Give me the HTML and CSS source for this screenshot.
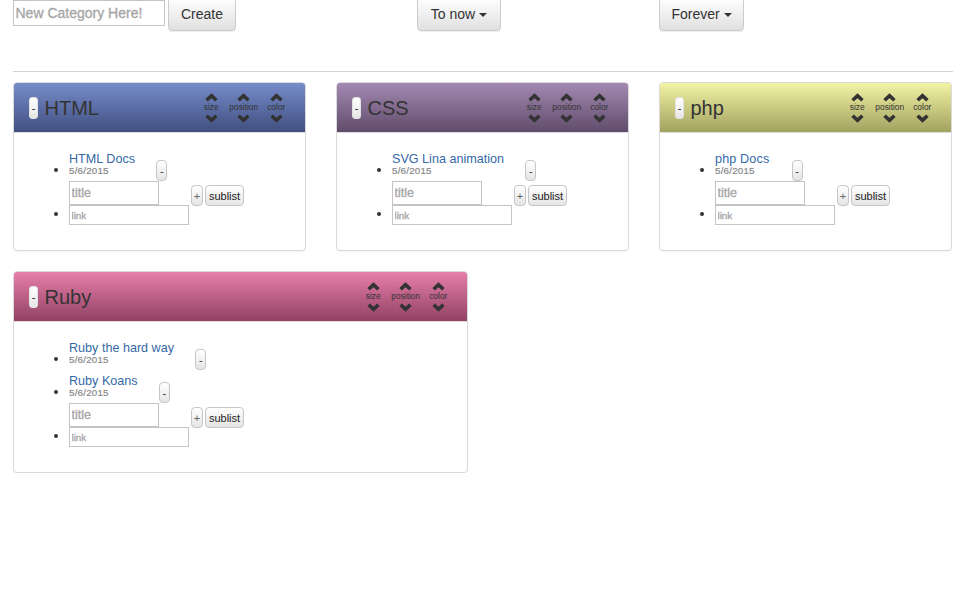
FILE: index.html
```html
<!DOCTYPE html>
<html lang="en">
<head>
<meta charset="utf-8">
<title>Categories</title>
<link rel="stylesheet" href="styles.css">
</head>
<body>
<svg class="defs" width="0" height="0">
  <symbol id="up" viewBox="0 0 14 9"><path d="M7 0 13.6 6 11 8.9 7 5.2 3 8.9.4 6Z"/></symbol>
  <symbol id="down" viewBox="0 0 14 9"><path d="M7 9 .4 3 3 .1 7 3.8 11 .1 13.6 3Z"/></symbol>
</svg>
<header class="toolbar">
  <form class="create">
    <input class="new-category" type="text" placeholder="New Category Here!">
    <button class="btn" type="button">Create</button>
  </form>
  <div><button class="btn btn-now" type="button">To now <span class="caret"></span></button></div>
  <div><button class="btn btn-forever" type="button">Forever <span class="caret"></span></button></div>
</header>
<main class="board">
  <section class="panel">
    <div class="head blue">
      <button class="mini remove">-</button><h2>HTML</h2>
      <div class="controls">
        <div><svg><use href="#up"/></svg><span>size</span><svg><use href="#down"/></svg></div>
        <div><svg><use href="#up"/></svg><span>position</span><svg><use href="#down"/></svg></div>
        <div><svg><use href="#up"/></svg><span>color</span><svg><use href="#down"/></svg></div>
      </div>
    </div>
    <ul>
      <li class="item"><div class="entry"><a>HTML Docs</a><small>5/6/2015</small></div><button class="mini">-</button></li>
      <li class="add"><div class="fields"><input class="title" placeholder="title"><input class="link" placeholder="link"></div><button class="mini plus">+</button><button class="mini sub">sublist</button></li>
    </ul>
  </section>
  <section class="panel">
    <div class="head purple">
      <button class="mini remove">-</button><h2>CSS</h2>
      <div class="controls">
        <div><svg><use href="#up"/></svg><span>size</span><svg><use href="#down"/></svg></div>
        <div><svg><use href="#up"/></svg><span>position</span><svg><use href="#down"/></svg></div>
        <div><svg><use href="#up"/></svg><span>color</span><svg><use href="#down"/></svg></div>
      </div>
    </div>
    <ul>
      <li class="item"><div class="entry"><a>SVG Lina animation</a><small>5/6/2015</small></div><button class="mini">-</button></li>
      <li class="add"><div class="fields"><input class="title" placeholder="title"><input class="link" placeholder="link"></div><button class="mini plus">+</button><button class="mini sub">sublist</button></li>
    </ul>
  </section>
  <section class="panel">
    <div class="head yellow">
      <button class="mini remove">-</button><h2>php</h2>
      <div class="controls">
        <div><svg><use href="#up"/></svg><span>size</span><svg><use href="#down"/></svg></div>
        <div><svg><use href="#up"/></svg><span>position</span><svg><use href="#down"/></svg></div>
        <div><svg><use href="#up"/></svg><span>color</span><svg><use href="#down"/></svg></div>
      </div>
    </div>
    <ul>
      <li class="item loose"><div class="entry"><a>php Docs</a><small>5/6/2015</small></div><button class="mini">-</button></li>
      <li class="add"><div class="fields"><input class="title" placeholder="title"><input class="link" placeholder="link"></div><button class="mini plus">+</button><button class="mini sub">sublist</button></li>
    </ul>
  </section>
  <section class="panel wide">
    <div class="head pink">
      <button class="mini remove">-</button><h2>Ruby</h2>
      <div class="controls">
        <div><svg><use href="#up"/></svg><span>size</span><svg><use href="#down"/></svg></div>
        <div><svg><use href="#up"/></svg><span>position</span><svg><use href="#down"/></svg></div>
        <div><svg><use href="#up"/></svg><span>color</span><svg><use href="#down"/></svg></div>
      </div>
    </div>
    <ul>
      <li class="item"><div class="entry"><a>Ruby the hard way</a><small>5/6/2015</small></div><button class="mini">-</button></li>
      <li class="item"><div class="entry"><a>Ruby Koans</a><small>5/6/2015</small></div><button class="mini">-</button></li>
      <li class="add"><div class="fields"><input class="title" placeholder="title"><input class="link" placeholder="link"></div><button class="mini plus">+</button><button class="mini sub">sublist</button></li>
    </ul>
  </section>
</main>
</body>
</html>
```
FILE: styles.css
```css
* { box-sizing: border-box; }
html { overflow: hidden; }
body {
  margin: 0;
  padding: 0 10px 0 13px;
  background: #fff;
  color: #333;
  font: 14px/20px "Liberation Sans", Arial, sans-serif;
}
.defs { display: none; }
button, input { margin: 0; font-family: inherit; }
.toolbar {
  display: grid;
  grid-template-columns: 404px 242px 1fr;
  align-items: start;
  height: 72px;
  border-bottom: 1px solid #d4d4d4;
}
.create { display: flex; align-items: flex-start; gap: 3px; }
input {
  display: block;
  padding: 1px 2px 1px 1.5px;
  border: 1px solid #c4c4c4;
  border-radius: 0;
  background: #fff;
  outline: 0;
}
input::placeholder { color: #a5a5a5; opacity: 1; -webkit-text-stroke: .3px #a5a5a5; }
.new-category { width: 152px; height: 26px; font-size: 14px; }
.btn {
  display: flex;
  align-items: center;
  justify-content: center;
  width: 68px;
  height: 34px;
  margin-top: -3px;
  padding: 0;
  border: 1px solid #ccc;
  border-radius: 4px;
  background: linear-gradient(#fff, #e0e0e0);
  box-shadow: 0 1px 1px rgba(0, 0, 0, .07);
  color: #333;
  font-size: 14px;
}
.btn-now { width: 84px; }
.btn-forever { width: 85px; }
.caret {
  margin: 1px 0 0 4px;
  border: 4px solid transparent;
  border-top-color: #333;
  border-bottom: 0;
}
.board {
  display: grid;
  grid-template-columns: repeat(3, 293px);
  column-gap: 30px;
  row-gap: 20px;
  align-items: start;
  padding-top: 10px;
}
.panel {
  height: 169px;
  border: 1px solid #dadada;
  border-radius: 4px;
  background: #fff;
  box-shadow: 0 1px 1px rgba(0, 0, 0, .05);
}
.panel.wide { grid-column: 1 / 3; width: 455px; height: 202px; }
.head {
  display: flex;
  align-items: center;
  height: 50px;
  padding: 0 12.5px 0 15px;
  border-bottom: 1px solid #ddd;
  border-radius: 3px 3px 0 0;
}
.blue { background: linear-gradient(#768cca, #414f80); }
.purple { background: linear-gradient(#a389b2, #604c6b); }
.yellow { background: linear-gradient(#f2f3a4, #a2a260); }
.pink { background: linear-gradient(#e77faa, #914263); }
h2 { margin: 0 0 0 6.5px; font-size: 20px; font-weight: 400; line-height: 24px; }
.controls { display: grid; grid-template-columns: repeat(3, 32.5px); margin-left: auto; }
.controls div { display: flex; flex-direction: column; align-items: center; padding-top: 1px; }
.controls svg { display: block; width: 13px; height: 9px; fill: #333; }
.controls span { font-size: 8.4px; line-height: 10px; margin: 0 0 2px; }
.mini {
  flex: none;
  width: 11px;
  height: 21px;
  padding: 0;
  border: 1px solid #c6c6c6;
  border-radius: 4px;
  background: linear-gradient(#fff, #e5e5e5);
  color: #333;
  font-size: 11px;
  line-height: 18px;
  text-align: center;
}
.mini.remove { width: 9px; height: 22px; border-color: #e2e2e2; border-radius: 3px; color: #222; }
ul { margin: 0; padding: 15px 0 0 55px; list-style: none; }
.item, .add { display: flex; align-items: flex-start; }
.item { height: 33px; }
.item::before, .add::before {
  content: "";
  flex: none;
  width: 4px;
  height: 4px;
  margin: 20px 11px 0 -15px;
  border-radius: 50%;
  background: #333;
}
.add::before { margin-top: 31px; }
.entry a { display: block; padding-top: 3px; color: #3569a6; font-size: 12.6px; line-height: 16px; white-space: nowrap; }
.entry small { display: block; color: #888; font-size: 9.8px; letter-spacing: .2px; line-height: 9px; margin-top: -1px; -webkit-text-stroke: .2px #888; }
.item .mini { margin: 12px 0 0 21.3px; }
.loose a { letter-spacing: .15px; }
.loose .mini { margin-left: 22.3px; }
.fields { width: 120px; margin-right: 2px; }
.title { width: 90px; height: 24px; font-size: 12.6px; }
.link { width: 120px; height: 20px; font-size: 9.8px; }
.plus { width: 12px; margin: 4px 2px 0 0; color: #666; }
.sub { width: 39px; margin-top: 4px; color: #222; }
```
